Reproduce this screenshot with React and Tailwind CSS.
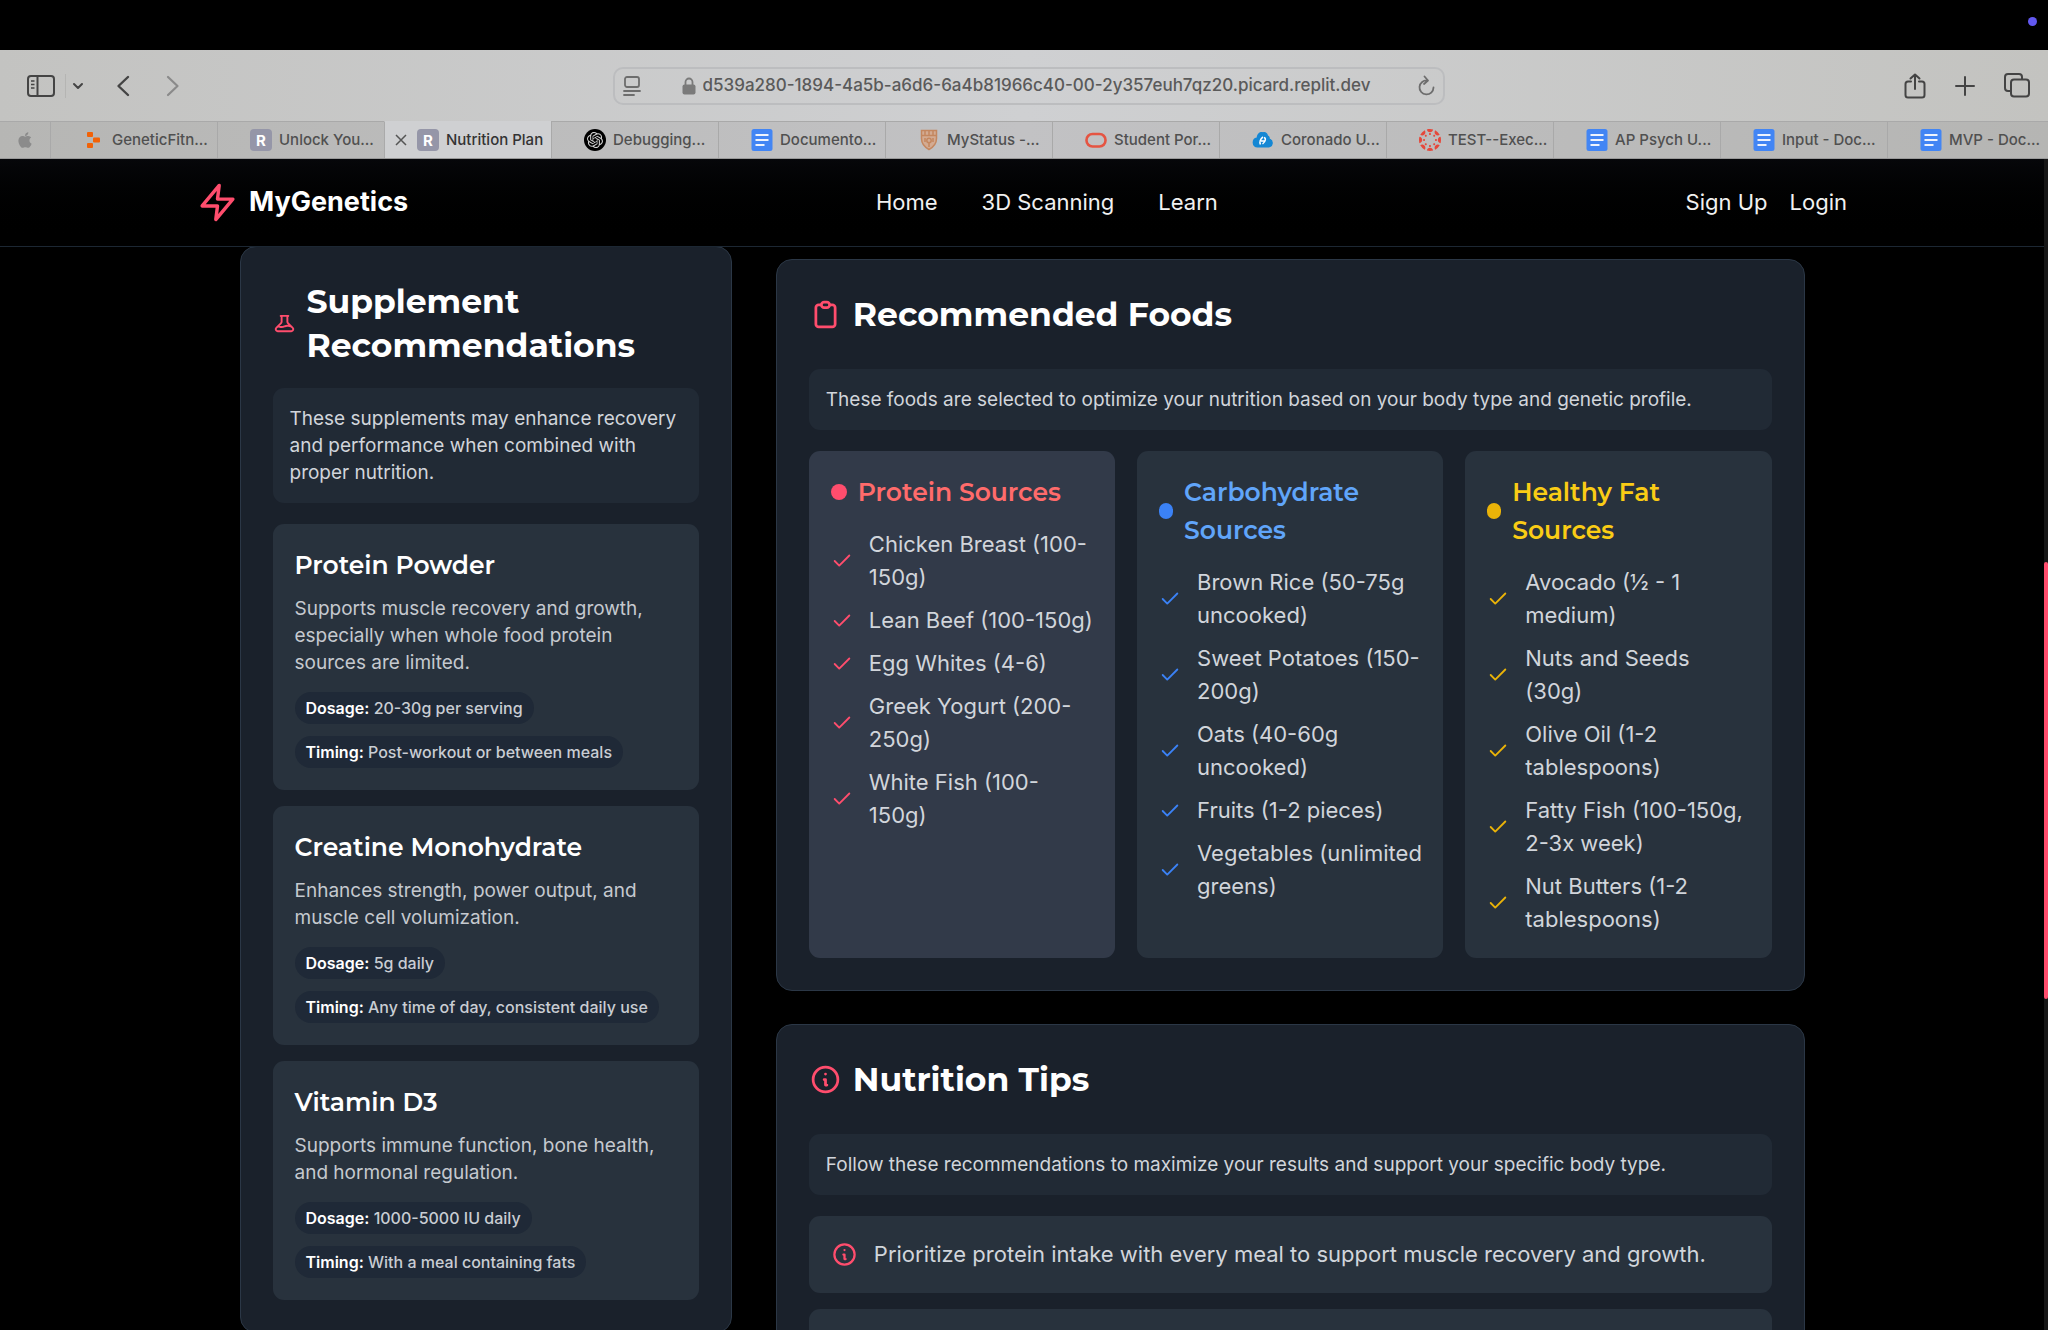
import React from "react";
import { ChevronDown } from "lucide-react";
import { FiCheck, FiZap } from "react-icons/fi";
import { SiCanvas, SiOpenai } from "react-icons/si";
import { FaApple } from "react-icons/fa";

const supplements = [
  {
    name: "Protein Powder",
    text: "Supports muscle recovery and growth, especially when whole food protein sources are limited.",
    dosage: "20-30g per serving",
    timing: "Post-workout or between meals",
  },
  {
    name: "Creatine Monohydrate",
    text: "Enhances strength, power output, and muscle cell volumization.",
    dosage: "5g daily",
    timing: "Any time of day, consistent daily use",
  },
  {
    name: "Vitamin D3",
    text: "Supports immune function, bone health, and hormonal regulation.",
    dosage: "1000-5000 IU daily",
    timing: "With a meal containing fats",
  },
];

const foods = [
  {
    title: "Protein Sources",
    card: "bg-[#323a49] pr-[22px]",
    head: "text-[#ff6b6b]",
    dot: "w-4 bg-[#ff4d6d]",
    check: "text-[#ff4d6d]",
    items: ["Chicken Breast (100-150g)", "Lean Beef (100-150g)", "Egg Whites (4-6)", "Greek Yogurt (200-250g)", "White Fish (100-150g)"],
  },
  {
    title: "Carbohydrate Sources",
    card: "bg-[#28323d] pr-4",
    head: "text-[#60a5fa]",
    dot: "w-3.5 bg-[#3b82f6]",
    check: "text-[#3b82f6]",
    items: ["Brown Rice (50-75g uncooked)", "Sweet Potatoes (150-200g)", "Oats (40-60g uncooked)", "Fruits (1-2 pieces)", "Vegetables (unlimited greens)"],
  },
  {
    title: "Healthy Fat Sources",
    card: "bg-[#28323d] pr-[22px]",
    head: "text-[#facc15]",
    dot: "w-3.5 bg-[#eab308]",
    check: "text-[#eab308]",
    items: ["Avocado (½ - 1 medium)", "Nuts and Seeds (30g)", "Olive Oil (1-2 tablespoons)", "Fatty Fish (100-150g, 2-3x week)", "Nut Butters (1-2 tablespoons)"],
  },
];

function InfoIcon({ className }) {
  return (
    <svg viewBox="0 0 24 24" fill="none" stroke="currentColor" strokeWidth="2" strokeLinecap="round" strokeLinejoin="round" className={className}>
      <path d="M13 16h-1v-4h-1m1-4h.01M21 12a9 9 0 11-18 0 9 9 0 0118 0z" />
    </svg>
  );
}

function FlaskIcon({ className }) {
  return (
    <svg viewBox="0 0 24 24" fill="none" stroke="currentColor" strokeWidth="2" strokeLinecap="round" strokeLinejoin="round" className={className}>
      <path d="M19.428 15.428a2 2 0 00-1.022-.547l-2.387-.477a6 6 0 00-3.86.517l-.318.158a6 6 0 01-3.86.517L6.05 15.21a2 2 0 00-1.806.547M8 4h8l-1 1v5.172a2 2 0 00.586 1.414l5 5c1.26 1.26.367 3.414-1.415 3.414H4.828c-1.782 0-2.674-2.154-1.414-3.414l5-5A2 2 0 009 10.172V5L8 4z" />
    </svg>
  );
}

function ClipboardIcon({ className }) {
  return (
    <svg viewBox="0 0 24 24" fill="none" stroke="currentColor" strokeWidth="2" strokeLinecap="round" strokeLinejoin="round" className={className}>
      <path d="M9 5H7a2 2 0 00-2 2v12a2 2 0 002 2h10a2 2 0 002-2V7a2 2 0 00-2-2h-2M9 5a2 2 0 002 2h2a2 2 0 002-2M9 5a2 2 0 012-2h2a2 2 0 012 2" />
    </svg>
  );
}

/* ---- tab favicons ---- */

function ReplitIcon() {
  return (
    <svg viewBox="0 0 22 22" className="size-[22px]" fill="#f26207">
      <rect x="4" y="3" width="6" height="5" rx="1" />
      <rect x="10" y="8.500" width="7" height="5" rx="1" />
      <rect x="4" y="14" width="6" height="5" rx="1" />
    </svg>
  );
}

function LetterIcon() {
  return (
    <span className="grid size-[22px] place-items-center rounded-[4px] bg-[#9596a8] text-[15px] leading-none font-bold text-white">R</span>
  );
}

function DocsIcon() {
  return (
    <svg viewBox="0 0 22 22" className="size-[22px]">
      <rect x="0.500" width="21" height="22" rx="2.500" fill="#4285f4" />
      <path d="M4.500 6h13M4.500 11h13M4.500 16h9" stroke="#eef3fd" strokeWidth="2.200" />
    </svg>
  );
}

function ShieldIcon() {
  return (
    <svg viewBox="0 0 22 22" className="size-[22px]" fill="none" stroke="#c4875f" strokeWidth="1.500">
      <path d="M3.500 1.500h15v8c0 5-3 8.500-7.500 11-4.500-2.500-7.500-6-7.500-11z" fill="#d3ab92" />
      <path d="M4 6.500h14M7 2v4M11 2v4M15 2v4" />
      <circle cx="11" cy="11.500" r="2.200" />
      <path d="M11 14v4M7 9v4M15 9v4" />
    </svg>
  );
}

function OracleIcon() {
  return (
    <svg viewBox="0 0 22 22" className="size-[22px]" fill="none" stroke="#e55442" strokeWidth="2.600">
      <rect x="1.500" y="5" width="19" height="12.500" rx="6" />
    </svg>
  );
}

function CloudIcon() {
  return (
    <svg viewBox="0 0 22 22" className="size-[22px]">
      <path d="M5.500 18.500a5 5 0 01-.8-9.900C5 4.500 8 2.500 11 3.200c2-.9 4.500.5 5 3.300 1.500.8 2 2 1.800 3.300a4.500 4.500 0 01-.8 8.700z" fill="#1487d4" />
      <path d="M8.500 15.500c-1.500-2 0-6 2.500-7.500M12 8.500c2 .5 2 4-1.500 6.500M9 12h4" stroke="#fff" strokeWidth="1.500" fill="none" />
    </svg>
  );
}

const tabs = [
  { label: "GeneticFitn...", icon: <ReplitIcon /> },
  { label: "Unlock You...", icon: <LetterIcon /> },
  { label: "Nutrition Plan", icon: <LetterIcon />, active: true },
  {
    label: "Debugging...",
    icon: (
      <span className="grid size-[22px] place-items-center rounded-full bg-black">
        <SiOpenai size={16} color="#d4d4d4" />
      </span>
    ),
  },
  { label: "Documento...", icon: <DocsIcon /> },
  { label: "MyStatus -...", icon: <ShieldIcon /> },
  { label: "Student Por...", icon: <OracleIcon /> },
  { label: "Coronado U...", icon: <CloudIcon /> },
  { label: "TEST--Exec...", icon: <SiCanvas size={22} color="#e5483b" /> },
  { label: "AP Psych U...", icon: <DocsIcon /> },
  { label: "Input - Doc...", icon: <DocsIcon /> },
  { label: "MVP - Doc...", icon: <DocsIcon /> },
];

function Toolbar() {
  return (
    <div className="flex h-[71px] items-center bg-linear-to-r from-[#c3c3c1] via-[#cfd0d2] to-[#c3c3c0] pr-[18px] pl-[27px] text-[#444]">
      <div className="flex flex-1 items-center">
        <button aria-label="Show sidebar">
          <svg width="28" height="22" viewBox="0 0 28 22" fill="none" stroke="currentColor" strokeWidth="2">
            <rect x="1" y="1" width="26" height="20" rx="3" />
            <path d="M10.500 1v20" />
            <path d="M4 6h3.500M4 9.500h3.500M4 13h3.500" strokeWidth="1.500" />
          </svg>
        </button>
        <span className="ml-2.5 h-6 w-px bg-[#b5b5b3]" />
        <button aria-label="Sidebar menu" className="ml-1">
          <ChevronDown size={16} strokeWidth={3} />
        </button>
        <button aria-label="Back" className="ml-[30px]">
          <svg width="14" height="22" viewBox="0 0 14 22" fill="none" stroke="currentColor" strokeWidth="2.400" strokeLinecap="round" strokeLinejoin="round">
            <path d="M12 2L2.500 11 12 20" />
          </svg>
        </button>
        <button aria-label="Forward" className="ml-9 text-[#8a8a8a]">
          <svg width="14" height="22" viewBox="0 0 14 22" fill="none" stroke="currentColor" strokeWidth="2.200" strokeLinecap="round" strokeLinejoin="round">
            <path d="M2 2l9.500 9L2 20" />
          </svg>
        </button>
      </div>
      <div className="flex h-[38px] w-[832px] items-center rounded-[10px] border-2 border-[#bcbdbf] pr-2 pl-2 text-[#6d6d6d]">
        <button aria-label="Reader">
          <svg width="18" height="20" viewBox="0 0 18 20" fill="none" stroke="currentColor" strokeWidth="1.800" strokeLinecap="round">
            <rect x="2" y="1" width="14" height="10" rx="2" />
            <path d="M1 15h16M1 19h10" />
          </svg>
        </button>
        <svg width="14" height="18" viewBox="0 0 14 18" className="ml-[41px] shrink-0 text-[#7a7a7a]">
          <path d="M3.500 8V5a3.500 3.500 0 017 0v3" fill="none" stroke="currentColor" strokeWidth="1.800" />
          <rect x="0.500" y="7.500" width="13" height="10" rx="2" fill="currentColor" />
        </svg>
        <input
          aria-label="Address"
          readOnly
          value="d539a280-1894-4a5b-a6d6-6a4b81966c40-00-2y357euh7qz20.picard.replit.dev"
          className="ml-[7px] min-w-0 flex-1 bg-transparent text-[17px] font-medium text-[#5a5a5a] outline-none"
        />
        <button aria-label="Reload">
          <svg width="17" height="21" viewBox="0 0 17 21" fill="none" stroke="currentColor" strokeWidth="1.800" strokeLinecap="round" strokeLinejoin="round">
            <path d="M9.500 5.500A7 7 0 1 0 15.500 12.500M6.500 1.500l3.500 4-4 3.500" />
          </svg>
        </button>
      </div>
      <div className="flex flex-1 items-center justify-end gap-[29px]">
        <button aria-label="Share">
          <svg width="22" height="26" viewBox="0 0 22 26" fill="none" stroke="currentColor" strokeWidth="2" strokeLinecap="round" strokeLinejoin="round">
            <path d="M7 8.500H4a2.500 2.500 0 00-2.500 2.500v11A2.500 2.500 0 004 24.500h14a2.500 2.500 0 002.500-2.500V11A2.500 2.500 0 0018 8.500h-3M11 16V1.500M6.500 5.500L11 1.500l4.500 4" />
          </svg>
        </button>
        <button aria-label="New tab">
          <svg width="20" height="20" viewBox="0 0 20 20" fill="none" stroke="currentColor" strokeWidth="2" strokeLinecap="round">
            <path d="M10 1v18M1 10h18" />
          </svg>
        </button>
        <button aria-label="Tab overview">
          <svg width="26" height="25" viewBox="0 0 26 25" fill="none" stroke="currentColor" strokeWidth="2" strokeLinejoin="round">
            <rect x="7" y="6.500" width="18" height="17" rx="3" />
            <path d="M7 18H4a3 3 0 01-3-3V4a3 3 0 013-3h11a3 3 0 013 3v2.500" />
          </svg>
        </button>
      </div>
    </div>
  );
}

function TabBar() {
  return (
    <div className="flex h-[38px] overflow-hidden border-b border-[#999] bg-linear-to-r from-[#b6b6b4] via-[#c2c2c4] to-[#b5b5b3]">
      <button aria-label="Apple" className="grid w-[50px] shrink-0 place-items-center border-t border-[#a9a9a9] text-[#8b8b8b]">
        <FaApple size={18} />
      </button>
      {tabs.map((tab) => (
        <button
          key={tab.label}
          className={
            "flex w-[167px] shrink-0 items-center gap-[7px] border-t border-l text-[15px] font-medium whitespace-nowrap " +
            (tab.active ? "border-t-[#cfd0d2] border-l-[#aaa] bg-[#cfd0d2] pl-[10px] text-[#333]" : "border-[#a9a9a9] pl-8 text-[#505050]")
          }
        >
          {tab.active && (
            <svg width="12" height="12" viewBox="0 0 12 12" stroke="#555" strokeWidth="1.500" className="mr-[3px] shrink-0">
              <path d="M1 1l10 10M11 1L1 11" />
            </svg>
          )}
          <span className="shrink-0">{tab.icon}</span>
          <span>{tab.label}</span>
        </button>
      ))}
    </div>
  );
}

function SiteHeader() {
  return (
    <header className="relative z-10 h-[88px] border-b border-[#1c2733] bg-linear-to-b from-[#06070a] to-black">
      <div className="mx-auto flex h-full max-w-[1650px] items-center justify-between text-[22px] text-[#f1f1f1]">
        <a href="#" className="flex items-center gap-[11px] text-[27px] font-bold text-white">
          <FiZap size={41} color="#ff4d6d" />
          MyGenetics
        </a>
        <nav className="flex gap-11">
          <a href="#">Home</a>
          <a href="#">3D Scanning</a>
          <a href="#">Learn</a>
        </nav>
        <div className="flex gap-[22px]">
          <a href="#">Sign Up</a>
          <a href="#">Login</a>
        </div>
      </div>
    </header>
  );
}

function Panel({ children }) {
  return <section className="rounded-2xl border border-[#2b3746] bg-[#1a212b] p-8">{children}</section>;
}

function Note({ children }) {
  return <p className="rounded-[11px] bg-[#212a35] p-[17px] text-[19px] leading-[27px] text-[#d1d5db]">{children}</p>;
}

function Pill({ label, value }) {
  return (
    <span className="rounded-full bg-[#1f2937] px-[11px] text-[16px] leading-8 font-medium text-[#c9cdd3]">
      <strong className="font-semibold text-white">{label}:</strong> {value}
    </span>
  );
}

export default function App() {
  return (
    <div className="flex h-screen flex-col overflow-hidden bg-black font-['Inter',sans-serif]">
      <div className="flex h-[50px] shrink-0 justify-end pt-[17px] pr-[11px]">
        <span className="size-[9px] rounded-full bg-[#6258f0]" />
      </div>
      <div className="shrink-0">
        <Toolbar />
        <TabBar />
      </div>
      <div className="flex min-h-0 flex-1">
        <div className="min-w-0 flex-1 overflow-hidden">
          <SiteHeader />
          <main className="mx-auto -mt-px grid max-w-[1565px] grid-cols-3 items-start gap-11">
            <Panel>
              <h2 className="flex items-center gap-[11px] font-['Montserrat','Inter',sans-serif] text-[33px] leading-[44px] font-bold text-white">
                <FlaskIcon className="size-[23px] shrink-0 text-[#ff4d6d]" />
                Supplement Recommendations
              </h2>
              <div className="my-[21px]">
                <Note>These supplements may enhance recovery and performance when combined with proper nutrition.</Note>
              </div>
              <div className="flex flex-col gap-4">
                {supplements.map((s) => (
                  <article key={s.name} className="rounded-[11px] bg-[#28323d] p-[22px]">
                    <h3 className="font-['Montserrat','Inter',sans-serif] text-[25px] leading-[38px] font-semibold text-white">{s.name}</h3>
                    <p className="mt-[11px] text-[19px] leading-[27px] text-[#c5c9cf]">{s.text}</p>
                    <div className="mt-4 flex flex-col items-start gap-3">
                      <Pill label="Dosage" value={s.dosage} />
                      <Pill label="Timing" value={s.timing} />
                    </div>
                  </article>
                ))}
              </div>
            </Panel>
            <div className="col-span-2 flex flex-col gap-[33px] pt-[13px]">
              <Panel>
                <h2 className="flex items-center gap-[11px] font-['Montserrat','Inter',sans-serif] text-[33px] leading-[44px] font-bold text-white">
                  <ClipboardIcon className="size-[33px] shrink-0 text-[#ff4d6d]" />
                  Recommended Foods
                </h2>
                <div className="mt-[33px] mb-[21px]">
                  <Note>These foods are selected to optimize your nutrition based on your body type and genetic profile.</Note>
                </div>
                <div className="grid grid-cols-3 gap-[22px]">
                  {foods.map((f) => (
                    <article key={f.title} className={"rounded-[11px] pt-[22px] pb-[22px] pl-[22px] " + f.card}>
                      <h3 className={"flex items-center gap-[11px] font-['Montserrat','Inter',sans-serif] text-[25px] leading-[38px] font-semibold " + f.head}>
                        <span className={"h-4 shrink-0 rounded-full " + f.dot} />
                        {f.title}
                      </h3>
                      <ul className="mt-[17px] flex flex-col gap-2.5">
                        {f.items.map((item) => (
                          <li key={item} className="flex items-center gap-4 text-[22px] leading-[33px] text-[#d1d5db]">
                            <FiCheck size={22} className={"shrink-0 " + f.check} />
                            <span>{item}</span>
                          </li>
                        ))}
                      </ul>
                    </article>
                  ))}
                </div>
              </Panel>
              <Panel>
                <h2 className="flex items-center gap-[11px] font-['Montserrat','Inter',sans-serif] text-[33px] leading-[44px] font-bold text-white">
                  <InfoIcon className="size-[33px] shrink-0 text-[#ff4d6d]" />
                  Nutrition Tips
                </h2>
                <div className="mt-[33px] mb-[21px]">
                  <Note>Follow these recommendations to maximize your results and support your specific body type.</Note>
                </div>
                <ul className="flex flex-col gap-4">
                  <li className="flex items-center gap-4 rounded-[11px] bg-[#28323d] p-[22px] text-[22px] leading-[33px] text-[#d1d5db]">
                    <InfoIcon className="size-[27px] shrink-0 text-[#ff4d6d]" />
                    Prioritize protein intake with every meal to support muscle recovery and growth.
                  </li>
                  <li className="h-[77px] rounded-[11px] bg-[#28323d]" />
                </ul>
              </Panel>
            </div>
          </main>
        </div>
        <div className="w-1 shrink-0 bg-[#161616] pt-[403px]">
          <div className="h-[437px] rounded-full bg-[#ff4d6d]" />
        </div>
      </div>
    </div>
  );
}
